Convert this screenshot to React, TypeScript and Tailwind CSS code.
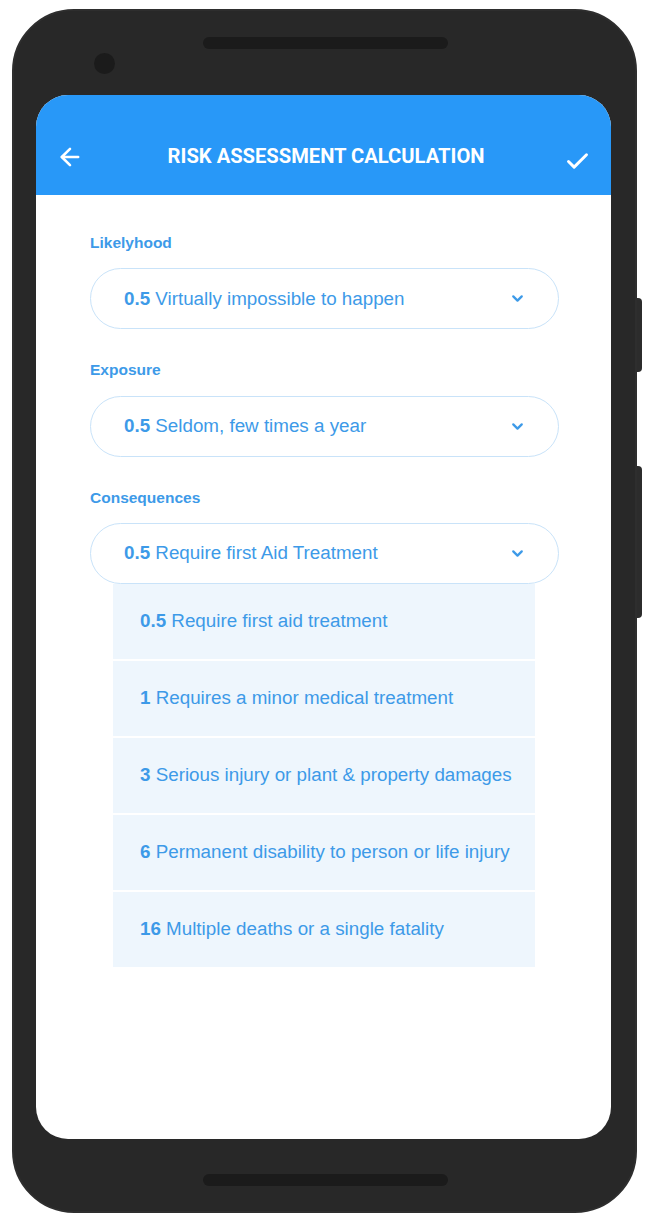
import { ArrowLeft, Check, ChevronDown } from "lucide-react";

type Option = { value: string; label: string };

const fields: { label: string; value: string; text: string }[] = [
  { label: "Likelyhood", value: "0.5", text: "Virtually impossible to happen" },
  { label: "Exposure", value: "0.5", text: "Seldom, few times a year" },
  { label: "Consequences", value: "0.5", text: "Require first Aid Treatment" },
];

const consequenceOptions: Option[] = [
  { value: "0.5", label: "Require first aid treatment" },
  { value: "1", label: "Requires a minor medical treatment" },
  { value: "3", label: "Serious injury or plant & property damages" },
  { value: "6", label: "Permanent disability to person or life injury" },
  { value: "16", label: "Multiple deaths or a single fatality" },
];

function SelectBox({ value, text }: { value: string; text: string }) {
  return (
    <div className="flex h-[61px] items-center justify-between rounded-full border border-[#c9e3f9] bg-white pl-[33px] pr-[32px] text-[18.8px] text-[#3d9ae8]">
      <span>
        <span className="font-bold">{value}</span> {text}
      </span>
      <ChevronDown className="h-[17px] w-[17px]" strokeWidth={3.2} />
    </div>
  );
}

export default function App() {
  return (
    <div className="min-h-[1221px] bg-white pt-[9px] [font-family:'Liberation_Sans',Arial,sans-serif]">
      <div className="relative ml-[12px] flex h-[1204px] w-[625px] flex-col rounded-[62px] border-2 border-[#2e2e2e] bg-[#282828]">
        {/* side buttons */}
        <div className="absolute left-[623px] top-[287px] h-[74px] w-[5px] rounded-r-sm bg-[#2c2c2c]" />
        <div className="absolute left-[623px] top-[455px] h-[152px] w-[5px] rounded-r-sm bg-[#2c2c2c]" />

        <div className="relative h-[84px] shrink-0">
          <div className="absolute left-[189px] top-[26px] h-[12px] w-[245px] rounded-full bg-[#1b1b1b]" />
          <div className="absolute left-[80px] top-[42px] h-[21px] w-[21px] rounded-full bg-[#1b1b1b]" />
        </div>

        <div className="ml-[22px] mr-[24px] flex flex-1 flex-col overflow-hidden rounded-[32px] bg-white">
          <header className="flex h-[100px] shrink-0 items-center justify-between bg-[#2898f8] px-[20px] pt-[24px] text-white">
            <ArrowLeft className="h-[28px] w-[28px]" strokeWidth={2.2} />
            <h1 className="ml-[4px] font-['Roboto',sans-serif] text-[21px] font-bold [transform:scaleX(0.96)]">
              RISK ASSESSMENT CALCULATION
            </h1>
            <Check className="mt-[8px] h-[27px] w-[27px]" strokeWidth={2.6} />
          </header>

          <div className="flex flex-col pl-[54px] pr-[52px] pt-[36px]">
            {fields.map((f, i) => (
              <div key={f.label} className={i > 0 ? "mt-[29px]" : ""}>
                <p className="mb-[14px] text-[15.5px] font-bold text-[#3d9ae8]">{f.label}</p>
                <SelectBox value={f.value} text={f.text} />
              </div>
            ))}

            <ul className="ml-[23px] mr-[24px] flex flex-col gap-[2px]">
              {consequenceOptions.map((o) => (
                <li
                  key={o.value}
                  className="flex h-[75px] items-center bg-[#eef6fd] pl-[27px] text-[18.8px] text-[#3d9ae8]"
                >
                  <span>
                    <span className="font-bold">{o.value}</span> {o.label}
                  </span>
                </li>
              ))}
            </ul>
          </div>
        </div>

        <div className="relative h-[72px] shrink-0">
          <div className="absolute left-[189px] top-[35px] h-[12px] w-[245px] rounded-full bg-[#1b1b1b]" />
        </div>
      </div>
    </div>
  );
}
